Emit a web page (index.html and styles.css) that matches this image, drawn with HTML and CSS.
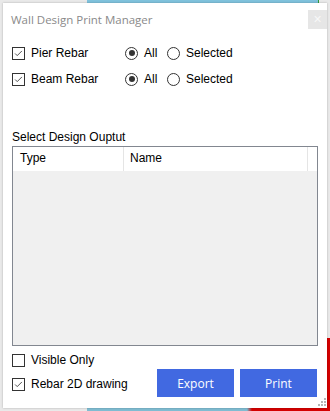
FILE: index.html
```html
<!DOCTYPE html>
<html>
<head>
<meta charset="utf-8">
<link rel="stylesheet" href="styles.css">
</head>
<body>
<div class="bg-top"></div>
<div class="bg-bottom"></div>
<div class="bg-right"></div>
<div class="dialog">
  <div class="titlebar">
    <span class="title">Wall Design Print Manager</span>
    <span class="close">×</span>
  </div>
  <div class="opt-row first">
    <label class="chk"><span class="box checked"><svg viewBox="0 0 13 13"><path d="M2.5 6.5 L5 9 L10.5 3.5" fill="none" stroke="#333" stroke-width="1"/></svg></span>Pier Rebar</label>
    <div class="radios">
      <label class="rad"><span class="circle on"></span>All</label>
      <label class="rad"><span class="circle"></span>Selected</label>
    </div>
  </div>
  <div class="opt-row">
    <label class="chk"><span class="box checked"><svg viewBox="0 0 13 13"><path d="M2.5 6.5 L5 9 L10.5 3.5" fill="none" stroke="#333" stroke-width="1"/></svg></span>Beam Rebar</label>
    <div class="radios">
      <label class="rad"><span class="circle on"></span>All</label>
      <label class="rad"><span class="circle"></span>Selected</label>
    </div>
  </div>
  <div class="section-label">Select Design Ouptut</div>
  <div class="list">
    <div class="list-head">
      <div class="col col-type">Type</div>
      <div class="col col-name">Name</div>
      <div class="col col-rest"></div>
    </div>
    <div class="list-body"></div>
  </div>
  <div class="bottom">
    <div class="bottom-left">
      <label class="chk"><span class="box"></span>Visible Only</label>
      <label class="chk"><span class="box checked"><svg viewBox="0 0 13 13"><path d="M2.5 6.5 L5 9 L10.5 3.5" fill="none" stroke="#333" stroke-width="1"/></svg></span>Rebar 2D drawing</label>
    </div>
    <div class="buttons">
      <button class="btn">Export</button>
      <button class="btn">Print</button>
    </div>
  </div>
  <div class="grip">
    <svg viewBox="0 0 9 9" width="9" height="9">
      <rect x="6" y="0" width="2" height="2" fill="#b5b5b5"/>
      <rect x="3" y="3" width="2" height="2" fill="#b5b5b5"/>
      <rect x="6" y="3" width="2" height="2" fill="#b5b5b5"/>
      <rect x="0" y="6" width="2" height="2" fill="#b5b5b5"/>
      <rect x="3" y="6" width="2" height="2" fill="#b5b5b5"/>
      <rect x="6" y="6" width="2" height="2" fill="#b5b5b5"/>
    </svg>
  </div>
</div>
</body>
</html>
```
FILE: styles.css
```css
* { box-sizing: border-box; }
html, body { margin: 0; padding: 0; }
body {
  width: 330px;
  height: 411px;
  background: #e9e9e9;
  position: relative;
  overflow: hidden;
  font-family: "Liberation Sans", Arial, sans-serif;
  font-size: 12px;
  color: #000;
}
.bg-top {
  position: absolute;
  left: 87px; top: 0;
  width: 232px; height: 4px;
  background: #7fc2dc;
  border-right: 1px solid #2e9e3a;
}
.bg-bottom {
  position: absolute;
  left: 87px; top: 406px;
  width: 243px; height: 5px;
  background: linear-gradient(to right, #7fbcd2 0, #7fbcd2 160px, #d40000 165px, #d40000 100%);
}
.bg-right {
  position: absolute;
  left: 327px; top: 338px;
  width: 3px; height: 73px;
  background: #d40000;
}
.dialog {
  position: absolute;
  left: 3px; top: 3px;
  width: 324px; height: 405px;
  background: #fff;
  box-shadow: 0 0 2px rgba(0,0,0,0.25);
}
.titlebar {
  display: flex;
  justify-content: space-between;
  align-items: center;
  height: 19px;
  margin-top: 7px;
  padding-left: 8px;
}
.title {
  color: #8a8a8a;
  font-family: "Open Sans", sans-serif;
  font-size: 11.5px;
}
.close {
  width: 19px; height: 19px;
  background: #e6e6e6;
  color: #f8f8f8;
  font-size: 14px;
  line-height: 19px;
  text-align: center;
}
.opt-row {
  display: flex;
  align-items: center;
  height: 20px;
  padding-left: 9px;
  margin-top: 6px;
}
.opt-row.first { margin-top: 14px; }
.chk {
  display: flex;
  align-items: center;
  gap: 6px;
  width: 113px;
}
.box {
  width: 13px; height: 13px;
  border: 1px solid #333;
  background: #fff;
  display: block;
  flex: none;
}
.box svg { display: block; width: 11px; height: 11px; }
.radios { display: flex; gap: 0; }
.rad {
  display: flex;
  align-items: center;
  gap: 6px;
}
.rad:first-child { width: 42px; }
.circle {
  width: 13px; height: 13px;
  border: 1px solid #333;
  border-radius: 50%;
  position: relative;
  flex: none;
}
.circle.on::after {
  content: "";
  position: absolute;
  left: 2.5px; top: 2.5px;
  width: 6px; height: 6px;
  border-radius: 50%;
  background: #333;
}
.section-label {
  padding-left: 9px;
  margin-top: 40px;
  height: 16px;
  line-height: 16px;
}
.list {
  margin: 1px 0 0 9px;
  width: 306px;
  height: 200px;
  border: 1px solid #828790;
  background: #f0f0f0;
  display: flex;
  flex-direction: column;
}
.list-head {
  display: flex;
  height: 24px;
  background: #fff;
  flex: none;
}
.col {
  height: 24px;
  line-height: 22px;
  padding-left: 7px;
  border-right: 1px solid #e5e5e5;
}
.col-type { width: 111px; }
.col-name { width: 184px; padding-left: 6px; }
.col-rest { flex: 1; border-right: none; }
.list-body { flex: 1; }
.bottom {
  display: flex;
  justify-content: space-between;
  padding-left: 9px;
  margin-top: 6px;
}
.bottom-left {
  display: flex;
  flex-direction: column;
  gap: 8px;
}
.bottom-left .chk { width: auto; height: 16px; }
.buttons {
  display: flex;
  gap: 6px;
  margin-top: 17px;
  margin-right: 10px;
}
.btn {
  width: 77px; height: 28px;
  background: #4169e1;
  border: none;
  color: #fff;
  font-family: "Open Sans", sans-serif;
  font-size: 12px;
  padding: 0;
}
.grip {
  position: absolute;
  right: 0; bottom: 1px;
  width: 9px; height: 9px;
}
.grip svg { display: block; }
```
